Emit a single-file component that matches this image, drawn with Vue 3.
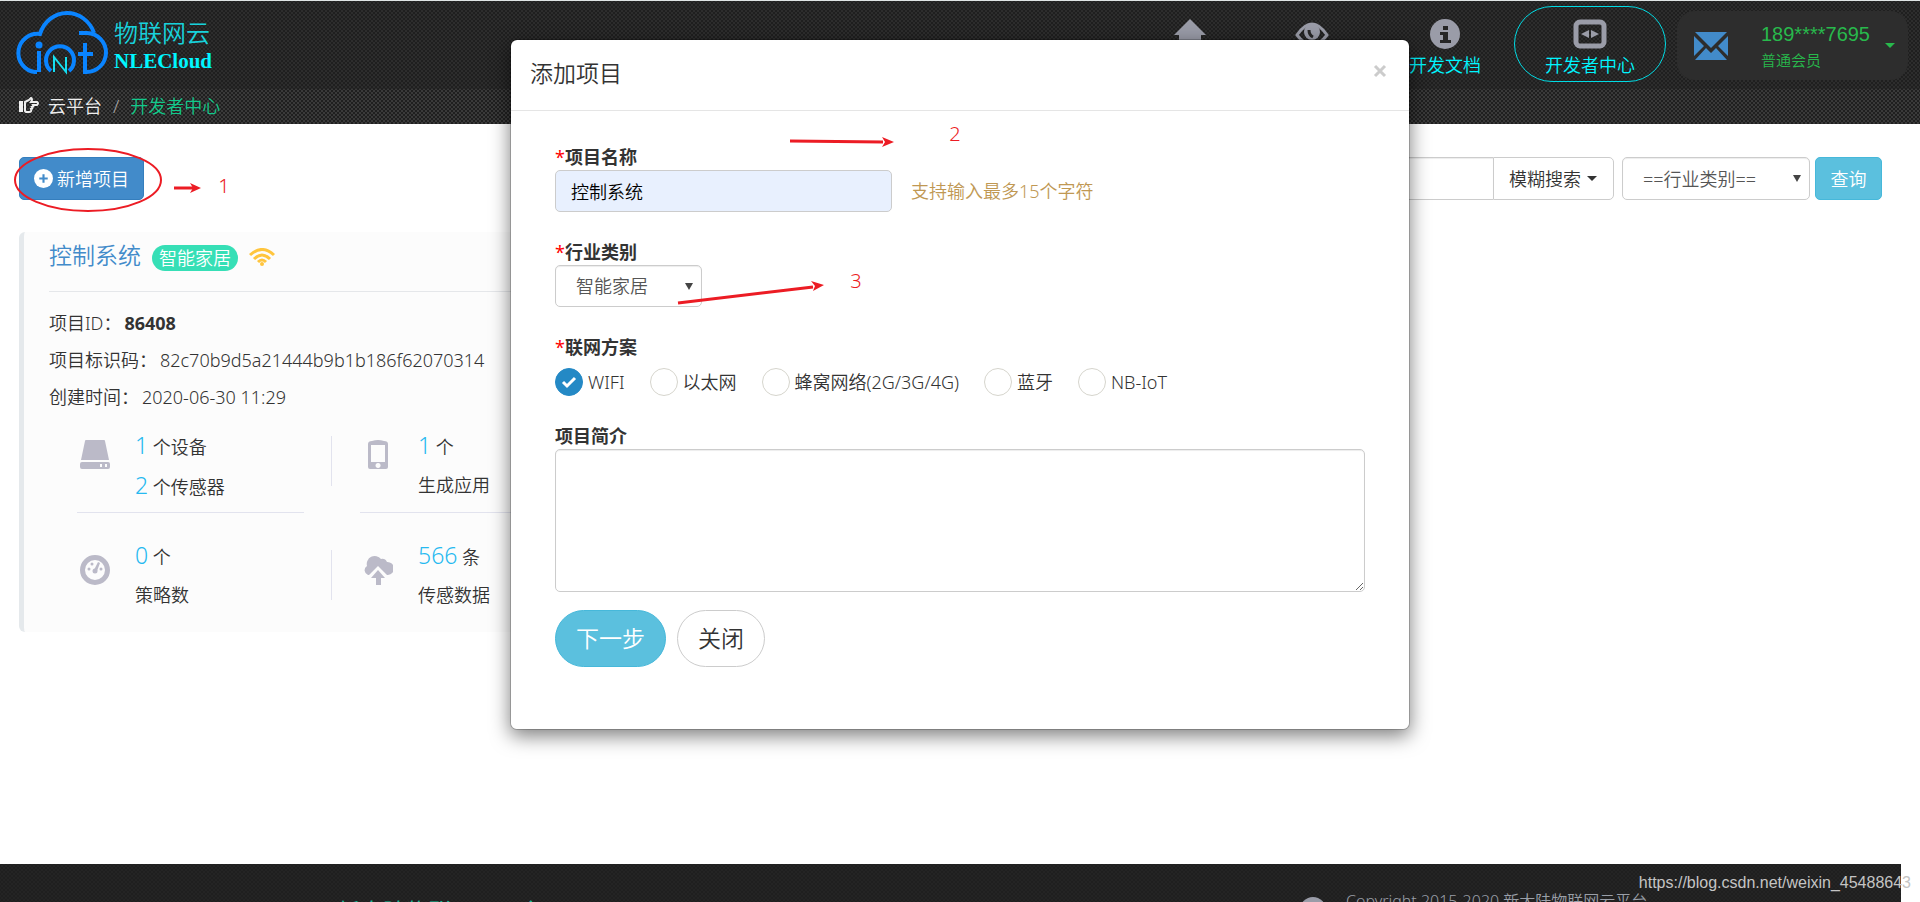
<script setup>
import { ref } from 'vue'

const projectName = ref('控制系统')
const industry = ref('智能家居')
const filterIndustry = ref('==行业类别==')
const network = ref('WIFI')
const intro = ref('')
const keyword = ref('')
const networks = ['WIFI', '以太网', '蜂窝网络(2G/3G/4G)', '蓝牙', 'NB-IoT']
const facts = [
  { label: '项目ID：', value: '86408', strong: true },
  { label: '项目标识码：', value: '82c70b9d5a21444b9b1b186f62070314' },
  { label: '创建时间：', value: '2020-06-30 11:29' },
]
</script>

<template>
  <div class="page">
    <header class="header">
      <div class="topbar">
        <a class="logo" href="#">
          <svg class="logo-mark" viewBox="3 0 92 64" fill="none" stroke="#0a84ff" stroke-width="4">
            <path d="M24 61H22A19 19 0 1 1 27 23C31 10 42 2 54 2C66 2 77 10 81 22" />
            <path d="M66 22H74A19.500 19.500 0 0 1 73 61H72V32" />
            <path d="M65 43H80" />
            <path d="M26 61V40" />
            <circle cx="26" cy="34" r="3.500" fill="#0a84ff" stroke="none" />
            <path d="M38 60A14 14 0 1 1 56 60" />
            <path d="M41 61V46L53 61V46" stroke="#16dff0" stroke-width="2" />
          </svg>
          <span class="logo-text">
            <span class="logo-cn">物联网云</span>
            <span class="logo-en">NLECloud</span>
          </span>
        </a>
        <nav class="nav">
          <a class="nav-item home" href="#">
            <svg viewBox="0 0 34 30" fill="#9a9ca8"><path d="M17 0L33 16H28V29H21V21H13V29H6V16H1Z" /></svg>
            <span>首页</span>
          </a>
          <a class="nav-item demo" href="#">
            <svg viewBox="0 0 34 30" fill="none" stroke="#9a9ca8">
              <path d="M2 16Q17 -6 32 16Q17 36 2 16Z" stroke-width="3" />
              <circle cx="17" cy="13" r="8" fill="#9a9ca8" stroke="none" />
              <path d="M14 11Q14 16 18 18" stroke="#262626" stroke-width="3" />
            </svg>
            <span>案例展示</span>
          </a>
          <a class="nav-item docs" href="#">
            <svg viewBox="0 0 34 30"><circle cx="17" cy="15" r="15" fill="#9a9ca8" /><path d="M15 7h5v4h-5zM12 13h8v8h3v3H12v-3h3v-5h-3z" fill="#262626" /></svg>
            <span>开发文档</span>
          </a>
          <a class="nav-item current" href="#">
            <svg viewBox="0 0 34 30">
              <rect x="3" y="3" width="28" height="24" rx="4" fill="none" stroke="#9a9ca8" stroke-width="5" />
              <path d="M16 11v8l-8-4zM18 11v8l8-4z" fill="#9a9ca8" />
            </svg>
            <span>开发者中心</span>
          </a>
          <a class="user" href="#">
            <svg class="mail" viewBox="0 0 34 28" fill="#428bca"><path d="M1 0H33L17 16ZM0 4L10 14L0 24ZM34 4L24 14L34 24ZM12 16L17 21L22 16L33 28H1Z" /></svg>
            <span class="user-text">
              <span class="phone">189****7695</span>
              <span class="level">普通会员</span>
            </span>
            <span class="caret green"></span>
          </a>
        </nav>
      </div>
      <div class="crumbs">
        <svg viewBox="0 0 20 17"><path d="M0 4h4v11H0z" fill="#eee" /><path d="M6 5L10 3L12 1Q14 2 12 5H18Q20 6 18 8H14Q15 10 13 10Q14 12 12 12Q13 15 10 15H7L6 14Z" fill="none" stroke="#eee" stroke-width="2" /></svg>
        <a href="#">云平台</a>
        <span class="slash">/</span>
        <span class="here">开发者中心</span>
      </div>
    </header>

    <main class="main">
      <div class="toolbar">
        <button class="btn add" type="button">
          <svg viewBox="0 0 18 18"><circle cx="9" cy="9" r="9" fill="#fff" /><path d="M9 5v8M5 9h8" stroke="#428bca" stroke-width="2" /></svg>
          新增项目
        </button>
        <div class="filters">
          <div class="search-group">
            <input v-model="keyword" class="keyword" type="text" aria-label="关键字" />
            <button class="mode" type="button">模糊搜索<span class="caret"></span></button>
          </div>
          <span class="select filter">
            <select v-model="filterIndustry" aria-label="行业类别筛选">
              <option>==行业类别==</option>
              <option>智能家居</option>
            </select>
          </span>
          <button class="btn query" type="button">查询</button>
        </div>
        <svg class="mark mark-one" viewBox="0 0 230 70" fill="none" stroke="#ec1c24">
          <ellipse cx="76" cy="33" rx="73" ry="31" stroke-width="2" />
          <path d="M162 41H182" stroke-width="3" />
          <path d="M178 36L189 41L178 46L181 41Z" fill="#ec1c24" stroke="none" />
          <text x="212" y="46" class="digit">1</text>
        </svg>
      </div>

      <section class="cards">
        <article class="card">
          <div class="card-head">
            <a href="#" class="card-title">控制系统</a>
            <span class="badge">智能家居</span>
            <svg class="wifi" viewBox="0 0 26 18" fill="none" stroke="#ffc53d" stroke-width="3"><path d="M1 7Q13 -4 25 7M5 11Q13 3 21 11M9 14Q13 10 17 14" /><circle cx="13" cy="16" r="2" fill="#ffc53d" stroke="none" /></svg>
          </div>
          <div v-for="f in facts" :key="f.label" class="fact">
            <span>{{ f.label }}</span><b v-if="f.strong">{{ f.value }}</b><span v-else>{{ f.value }}</span>
          </div>
          <div class="stats">
            <div class="stat">
              <svg viewBox="0 0 30 30" fill="#bbbac8"><path d="M6 0H24Q25 0 25 1L29 20H1L5 1Q5 0 6 0Z" /><path fill-rule="evenodd" d="M2 22H28Q30 22 30 24V27Q30 29 28 29H2Q0 29 0 27V24Q0 22 2 22ZM20 24v3h2v-3zM25 24v3h2v-3z" /></svg>
              <div><p><i>1</i> 个设备</p><p><i>2</i> 个传感器</p></div>
            </div>
            <div class="stat">
              <svg viewBox="0 0 30 30" fill="#bbbac8"><path fill-rule="evenodd" d="M9 1Q15 -1 21 1Q25 1 25 4V27Q25 29 23 29H7Q5 29 5 27V4Q5 1 9 1ZM8 5V22H22V5ZM15 23a2.500 2.500 0 1 0 .1 0z" /></svg>
              <div><p><i>1</i> 个</p><p>生成应用</p></div>
            </div>
            <div class="stat">
              <svg viewBox="0 0 30 30" fill="#bbbac8"><circle cx="15" cy="15" r="12.500" fill="none" stroke="#bbbac8" stroke-width="5" /><circle cx="9" cy="14" r="1.500" /><circle cx="12" cy="9" r="1.500" /><circle cx="21" cy="14" r="1.500" /><circle cx="15" cy="16" r="2.500" /><path d="M14 15L18 7L20 8L17 16Z" /></svg>
              <div><p><i>0</i> 个</p><p>策略数</p></div>
            </div>
            <div class="stat">
              <svg viewBox="0 0 30 30" fill="#bbbac8"><path d="M5 20A5 5 0 0 1 4 11A8 8 0 0 1 18 4Q22 3 24 7A6.500 6.500 0 0 1 25 20H24L15 11L6 20Z" /><path d="M15 15L22 23H18V30H13V23H8Z" /></svg>
              <div><p><i>566</i> 条</p><p>传感数据</p></div>
            </div>
          </div>
        </article>
      </section>
    </main>

    <footer class="footer">
      <strong class="footer-brand">新大陆物联网云平台</strong>
      <div class="copyright"><span class="dot"></span>Copyright 2015-2020 新大陆物联网云平台</div>
    </footer>
    <span class="watermark">https://blog.csdn.net/weixin_45488643</span>

    <div class="modal-layer">
      <form class="modal" role="dialog" aria-labelledby="dialog-title" @submit.prevent>
        <div class="modal-head">
          <h4 id="dialog-title">添加项目</h4>
          <button class="close" type="button" aria-label="关闭对话框">
            <svg viewBox="0 0 14 14"><path d="M2 2L12 12M12 2L2 12" stroke="#ccc" stroke-width="3" /></svg>
          </button>
        </div>
        <div class="modal-body">
          <div class="field">
            <label for="name"><em>*</em>项目名称</label>
            <div class="line">
              <input id="name" v-model="projectName" class="name" type="text" />
              <span class="hint">支持输入最多15个字符</span>
            </div>
          </div>
          <div class="field">
            <label for="industry"><em>*</em>行业类别</label>
            <span class="select industry">
              <select id="industry" v-model="industry">
                <option>智能家居</option>
              </select>
            </span>
          </div>
          <fieldset class="field networks">
            <legend><em>*</em>联网方案</legend>
            <div class="radios">
              <label v-for="n in networks" :key="n" class="radio">
                <input v-model="network" type="radio" name="network" :value="n" />
                <svg v-if="network === n" viewBox="0 0 28 28"><path d="M8 14L12 18L20 10" fill="none" stroke="#fff" stroke-width="3" /></svg>
                {{ n }}
              </label>
            </div>
          </fieldset>
          <div class="field intro">
            <label for="intro">项目简介</label>
            <textarea id="intro" v-model="intro"></textarea>
          </div>
          <div class="actions">
            <button class="next" type="submit">下一步</button>
            <button class="cancel" type="button">关闭</button>
          </div>
        </div>
        <svg class="mark mark-form" viewBox="0 0 320 200" fill="none" stroke="#ec1c24">
          <path d="M1 21L94 22" stroke-width="3" />
          <path d="M93 17L105 22L93 27L96 22Z" fill="#ec1c24" stroke="none" />
          <text x="166" y="21" class="digit">2</text>
        </svg>
        <svg class="mark mark-select" viewBox="0 0 320 200" fill="none" stroke="#ec1c24">
          <path d="M1 183L136 167" stroke-width="3" />
          <path d="M134 161L147 165L136 171L138 166Z" fill="#ec1c24" stroke="none" />
          <text x="179" y="168" class="digit">3</text>
        </svg>
      </form>
    </div>
  </div>
</template>

<style>
body { margin: 0; background: #fff; }
</style>

<style scoped>
* { box-sizing: border-box; }
.page {
  position: relative;
  display: flex;
  flex-direction: column;
  height: 100vh;
  overflow: hidden;
  font: 350 18px/26px "Noto Sans", "Noto Sans CJK SC", sans-serif;
  color: #333;
}
a { color: inherit; text-decoration: none; }
input, select, textarea, button { font: inherit; color: inherit; margin: 0; }
button { cursor: pointer; white-space: nowrap; }

.header, .footer, .crumbs {
  --weave: #2d2d2d;
  background-color: #1f1f1f;
  background-image: radial-gradient(var(--weave) 1px, transparent 1px), radial-gradient(var(--weave) 1px, transparent 1px);
  background-size: 4px 4px;
  background-position: 0 0, 2px 2px;
}
.header { flex: none; border-top: 1px solid #dfe4e4; }
.topbar { display: flex; justify-content: space-between; height: 88px; padding: 5px 12px 0 15px; }
.logo { display: flex; gap: 5px; padding-top: 5px; align-self: flex-start; }
.logo-mark { width: 94px; height: 64px; }
.logo-text { display: flex; flex-direction: column; padding-top: 8px; }
.logo-cn { font-size: 24px; line-height: 28px; color: #18d2dc; }
.logo-en { font: bold 21px/28px "Liberation Serif", serif; color: #00f6ff; }

.nav { display: flex; align-items: flex-start; }
.nav-item {
  display: flex;
  flex-direction: column;
  align-items: center;
  height: 76px;
  padding-top: 12px;
  border: 1px solid transparent;
  color: #00f6ff;
}
.nav-item svg { width: 34px; height: 30px; margin-bottom: 3px; }
.home { width: 104px; margin-right: 18px; }
.demo { width: 104px; margin-right: 28px; }
.docs { width: 106px; margin-right: 16px; }
.current { width: 152px; border-color: #00dbe4; border-radius: 38px; margin-right: 11px; }
.user {
  display: flex;
  align-items: center;
  width: 231px;
  height: 69px;
  margin-top: 5px;
  padding: 0 13px 0 17px;
  border-radius: 18px;
  background: #2d2d2d;
  color: #28b94c;
}
.mail { width: 34px; height: 28px; }
.user-text { display: flex; flex-direction: column; margin-left: 33px; flex: 1; }
.phone { font: 20px/28px "Liberation Sans", sans-serif; }
.level { font-size: 15px; line-height: 24px; }
.caret { width: 0; height: 0; border: 5px solid transparent; border-top-color: currentColor; border-bottom: 0; }
.crumbs { --weave: #3a3a3a; display: flex; align-items: center; height: 35px; padding: 0 0 2px 19px; color: #eee; }
.crumbs svg { width: 20px; height: 17px; margin-right: 9px; }
.slash { margin: 0 11px; color: #aaa; }
.here { color: #12c98b; }

.main { flex: none; min-height: calc(100vh - 162px); padding: 33px 38px 0 19px; }
.toolbar { position: relative; display: flex; justify-content: space-between; }
.btn { height: 43px; border-radius: 5px; border: 1px solid; color: #fff; padding: 0 14px; }
.add { display: flex; align-items: center; gap: 4px; background: #428bca; border-color: #357ebd; }
.add svg { width: 19px; height: 19px; }
.query { min-width: 67px; background: #5bc0de; border-color: #46b8da; }
.filters { display: flex; }
.search-group { display: flex; margin-right: 8px; }
.keyword { width: 260px; border: 1px solid #ccc; border-right: 0; border-radius: 5px 0 0 5px; box-shadow: inset 0 1px 1px #00000013; }
.mode { display: flex; align-items: center; gap: 6px; width: 121px; padding: 0 15px; background: #fff; border: 1px solid #ccc; border-radius: 0 5px 5px 0; }
.select { position: relative; display: block; }
.select select {
  appearance: none;
  width: 100%;
  height: 43px;
  padding: 0 20px;
  border: 1px solid #ccc;
  border-radius: 5px;
  background: #fff;
  color: #555;
  box-shadow: inset 0 1px 1px #00000013;
}
.select::after {
  content: "";
  position: absolute;
  top: 18px;
  right: 9px;
  border: 4px solid transparent;
  border-top: 7px solid #444;
  border-bottom: 0;
}
.filter { width: 188px; margin-right: 5px; }

.mark { position: absolute; pointer-events: none; }
.mark-one { left: -7px; top: -10px; width: 230px; height: 70px; }
.mark-form { left: 278px; top: 80px; width: 320px; height: 200px; }
.mark-select { left: 166px; top: 80px; width: 320px; height: 200px; }
.digit { font-size: 20px; fill: #ec1c24; stroke: none; text-anchor: middle; }

.cards { display: grid; grid-template-columns: repeat(3, 1fr); margin-top: 32px; }
.card { border-left: 5px solid #e5e9ec; border-radius: 6px; background: #fcfcfc; padding: 0 25px; }
.card-head { display: flex; align-items: center; height: 60px; padding-bottom: 14px; margin-bottom: 13px; border-bottom: 1px solid #e5e7ea; }
.card-title { font-size: 23px; line-height: 30px; color: #428bca; }
.badge { margin: 6px 11px 0; padding: 0 7px; border-radius: 13px; background: #36dfb6; color: #fff; line-height: 26px; }
.wifi { width: 26px; height: 18px; margin-top: 4px; }
.fact { display: flex; gap: 3px; line-height: 37px; }
.fact b { font-weight: 700; }
.stats { display: grid; grid-template-columns: 1fr 1fr; }
.stat { position: relative; display: flex; align-items: flex-start; gap: 25px; height: 97px; padding: 10px 0 0 31px; }
.stat svg { width: 30px; height: 30px; flex: none; margin-top: 14px; }
.stat p { margin: 0; line-height: 38px; white-space: nowrap; }
.stat i { font-style: normal; font-size: 23px; color: #26b9f0; }
.stat:nth-child(-n+2)::after { content: ""; position: absolute; left: 28px; right: 28px; bottom: 0; border-bottom: 1px solid #e2e3ee; }
.stat:nth-child(odd)::before { content: ""; position: absolute; right: 0; top: 20px; height: 50px; border-right: 1px solid #e2e3ee; }
.stat:nth-child(n+3) { height: 119px; padding-top: 23px; }
.stat:nth-child(n+3) svg { margin-top: 19px; }
.stat:nth-child(n+3)::before { top: 37px; }

.footer { --weave: #242424; flex: none; display: flex; height: 120px; margin-right: 19px; padding: 24px 0 0 337px; color: #9a9fa8; }
.footer-brand { flex: 1; padding-top: 10px; font-size: 23px; font-weight: 400; color: #1abc9c; }
.copyright { display: flex; gap: 20px; align-self: flex-start; width: 601px; font-size: 16px; }
.dot { width: 26px; height: 26px; margin-top: 9px; border-radius: 50%; background: #9a9ca8; }
.watermark { position: absolute; right: 9px; bottom: 6px; font: 16px/26px "Liberation Sans", sans-serif; color: #c4c4c4; }

.modal-layer { position: absolute; inset: 0; padding: 39px 20px; pointer-events: none; }
.modal {
  position: relative;
  max-width: 900px;
  margin: 0 auto;
  border: 1px solid #0003;
  border-radius: 7px;
  background: #fff;
  background-clip: padding-box;
  box-shadow: 0 6px 19px #00000080;
  pointer-events: auto;
}
.modal-head { display: flex; justify-content: space-between; height: 71px; padding: 18px 20px 0 19px; border-bottom: 1px solid #e5e5e5; }
.modal-head h4 { margin: 0; font-size: 23px; line-height: 30px; font-weight: 350; }
.close { display: flex; align-self: flex-start; padding: 6px 2px; border: 0; background: none; }
.close svg { width: 14px; height: 14px; }
.modal-body { padding: 33px 44px 62px; }
.field { display: block; margin: 0 0 27px; padding: 0; border: 0; }
.field > label, legend { display: block; padding: 0; font-weight: 700; }
em { font-style: normal; font-weight: 400; color: #f00; }
.line { display: flex; align-items: center; gap: 19px; }
.name { width: 337px; height: 42px; padding: 0 15px; border: 1px solid #ccc; border-radius: 5px; background: #e8f0fe; color: #000; }
.hint { color: #c09853; }
.industry { width: 147px; }
.industry select { height: 42px; }
.networks { margin-bottom: 20px; }
.radios { display: flex; gap: 25px; height: 43px; align-items: center; }
.radio { position: relative; display: flex; align-items: center; gap: 5px; }
.radio input { appearance: none; width: 28px; height: 28px; border: 1px solid #d6d5cd; border-radius: 50%; }
.radio input:checked { background: #2489c5; border-color: #2489c5; }
.radio svg { position: absolute; left: 0; width: 28px; height: 28px; pointer-events: none; }
.intro { margin-bottom: 18px; }
textarea { display: block; width: 100%; height: 143px; border: 1px solid #ccc; border-radius: 5px; padding: 8px 15px; resize: both; box-shadow: inset 0 1px 1px #00000013; }
.actions { display: flex; gap: 11px; }
.actions button { height: 57px; padding: 0 20px 2px; border: 1px solid #ccc; border-radius: 29px; background: #fff; font-size: 23px; }
.actions .next { background: #5bc0de; border-color: #46b8da; color: #fff; }
</style>
